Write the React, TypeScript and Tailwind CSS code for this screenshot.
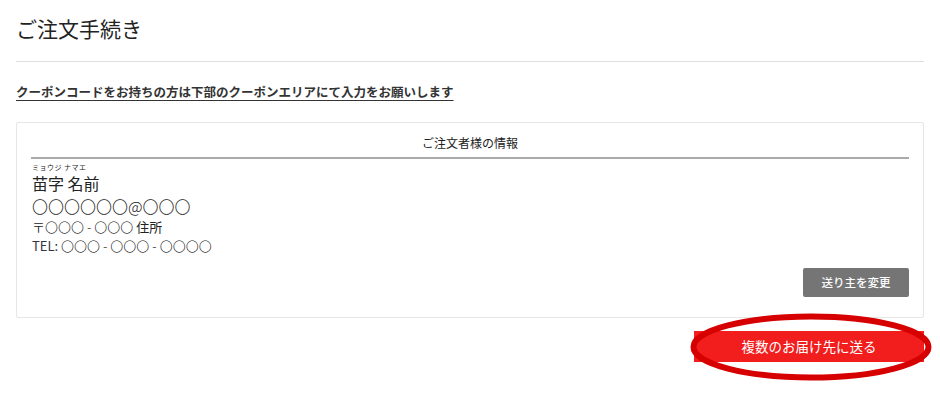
const Dash = () => <span className="mx-[3px]">-</span>;

const OrderProcedure = () => {
  return (
    <div className="relative w-[940px] h-[397px] bg-white px-4 text-[#333] font-['Noto_Sans_CJK_JP',sans-serif]">
      <h1 className="pt-[15px] pb-[16px] text-[21px] leading-[30px] text-[#222] border-b border-[#dedede] font-['Liberation_Serif','Noto_Sans_CJK_JP',serif]">
        ご注文手続き
      </h1>

      <p className="mt-[22px] text-[12.5px] leading-[18px] font-semibold underline underline-offset-[3px] font-['Liberation_Serif','Noto_Sans_CJK_JP',serif]">
        クーポンコードをお持ちの方は下部のクーポンエリアにて入力をお願いします
      </p>

      <div className="mt-[20px] h-[196px] border border-[#e6e6e6] rounded-[2px] px-[14px] pt-[11px] flex flex-col">
        <div className="text-center text-[12px] leading-[18px] pb-[5px] border-b-2 border-[#aaa] text-[#222]">
          ご注文者様の情報
        </div>
        <div className="pl-[1px] pt-[4px] text-[#222]">
          <div className="text-[7px] leading-[9px] tracking-[0.5px]">ミョウジ ナマエ</div>
          <div className="text-[16px] leading-[23px]">苗字 名前</div>
          <div className="text-[16px] leading-[22px] font-light">〇〇〇〇〇〇@〇〇〇</div>
          <div className="text-[13px] leading-[19px] font-light">
            〒〇〇〇<Dash />〇〇〇 <span className="font-normal">住所</span>
          </div>
          <div className="text-[13px] leading-[20px] font-light">
            <span className="font-normal text-[#334]">TEL:</span> 〇〇〇<Dash />〇〇〇<Dash />〇〇〇〇
          </div>
        </div>
        <div className="mt-auto mb-[20px] flex justify-end">
          <button className="w-[106px] h-[29px] rounded-[2px] bg-[#757575] text-white text-[11.5px] font-medium">
            送り主を変更
          </button>
        </div>
      </div>

      <div className="mt-[13px] flex justify-end">
        <button className="w-[230px] h-[31px] bg-[#f21d1d] text-white text-[13.5px]">
          複数のお届け先に送る
        </button>
      </div>

      <svg className="absolute left-[689px] top-[313px]" width="244" height="68" viewBox="0 0 244 68">
        <ellipse cx="122" cy="34" rx="117.5" ry="30.5" fill="none" stroke="#d70000" strokeWidth="6" />
      </svg>
    </div>
  );
};

export default function App() {
  return <OrderProcedure />;
}
